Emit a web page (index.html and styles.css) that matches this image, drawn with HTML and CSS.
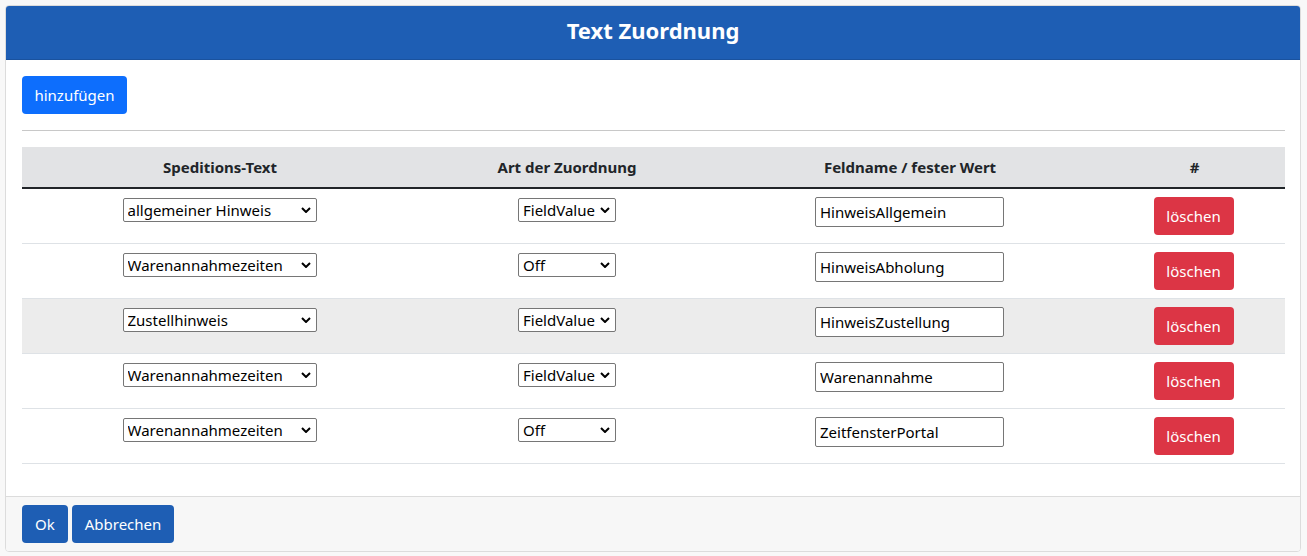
FILE: index.html
```html
<!DOCTYPE html>
<html lang="de">
<head>
    <meta charset="UTF-8">
    <meta name="viewport" content="width=device-width, initial-scale=1.0">
    <title>Text Zuordnung</title>
    <link rel="stylesheet" href="styles.css">
</head>
<body>

    <div class="dialog">
        <div class="dialog-header">Text Zuordnung</div>

        <div class="dialog-body">
            <button class="btn btn-add">hinzufügen</button>
            <hr>

            <table class="mapping">
                <thead>
                    <tr>
                        <th class="col-text">Speditions-Text</th>
                        <th class="col-type">Art der Zuordnung</th>
                        <th class="col-field">Feldname / fester Wert</th>
                        <th class="col-action">#</th>
                    </tr>
                </thead>
                <tbody>
                    <tr>
                        <td><select class="sel-text"><option>allgemeiner Hinweis</option></select></td>
                        <td><select class="sel-type"><option>FieldValue</option></select></td>
                        <td><input type="text" value="HinweisAllgemein"></td>
                        <td><button class="btn btn-delete">löschen</button></td>
                    </tr>
                    <tr>
                        <td><select class="sel-text"><option>Warenannahmezeiten</option></select></td>
                        <td><select class="sel-type"><option>Off</option></select></td>
                        <td><input type="text" value="HinweisAbholung"></td>
                        <td><button class="btn btn-delete">löschen</button></td>
                    </tr>
                    <tr class="hover">
                        <td><select class="sel-text"><option>Zustellhinweis</option></select></td>
                        <td><select class="sel-type"><option>FieldValue</option></select></td>
                        <td><input type="text" value="HinweisZustellung"></td>
                        <td><button class="btn btn-delete">löschen</button></td>
                    </tr>
                    <tr>
                        <td><select class="sel-text"><option>Warenannahmezeiten</option></select></td>
                        <td><select class="sel-type"><option>FieldValue</option></select></td>
                        <td><input type="text" value="Warenannahme"></td>
                        <td><button class="btn btn-delete">löschen</button></td>
                    </tr>
                    <tr>
                        <td><select class="sel-text"><option>Warenannahmezeiten</option></select></td>
                        <td><select class="sel-type"><option>Off</option></select></td>
                        <td><input type="text" value="ZeitfensterPortal"></td>
                        <td><button class="btn btn-delete">löschen</button></td>
                    </tr>
                </tbody>
            </table>
        </div>

        <div class="dialog-footer">
            <button class="btn btn-primary">Ok</button>
            <button class="btn btn-primary">Abbrechen</button>
        </div>
    </div>

</body>
</html>
```

FILE: styles.css
```css
body {
    margin: 0;
    padding: 5px 6px 4px 5px;
    background-color: #f8f8f8;
    font-family: "Noto Sans", "Open Sans", sans-serif;
    font-size: 15px;
    color: #212529;
}

.dialog {
    background-color: white;
    border: 1px solid #dcdcdc;
    border-radius: 4px;
    overflow: hidden;
}

.dialog-header {
    background-color: #1e5eb4;
    color: white;
    font-size: 22px;
    font-weight: bold;
    text-align: center;
    height: 53px;
    line-height: 49px;
    border-bottom: 1px solid #1a529e;
}

.dialog-body {
    padding: 16px 15px 32px 16px;
}

.btn {
    font-family: inherit;
    font-size: 15px;
    color: white;
    border: none;
    border-radius: 4px;
    height: 38px;
    padding: 0 12px;
    cursor: pointer;
}

.btn-add {
    background-color: #0d6efd;
    width: 105px;
}

.btn-delete {
    background-color: #dc3545;
    width: 80px;
    margin-left: -2px;
}

.btn-primary {
    background-color: #1e5eb4;
}

hr {
    border: none;
    border-top: 1px solid #c8c8c8;
    margin: 16px 0 16px 0;
}

.mapping {
    width: 100%;
    border-collapse: collapse;
}

.mapping th {
    background-color: #e2e3e5;
    font-size: 15px;
    font-weight: bold;
    height: 40px;
    padding: 0;
    border-bottom: 2px solid #212529;
}

.col-text { width: 396px; }
.col-type { width: 298px; }
.col-field { width: 388px; }

.mapping td {
    height: 54px;
    padding: 0;
    text-align: center;
    vertical-align: middle;
    border-bottom: 1px solid #dee2e6;
}

.mapping tr.hover td {
    background-color: #ececec;
}

select {
    appearance: none;
    font-family: inherit;
    font-size: 15px;
    color: #000;
    height: 24px;
    padding: 0 20px 0 4px;
    border: 1px solid #767676;
    border-radius: 2px;
    background: white url("data:image/svg+xml;utf8,<svg xmlns='http://www.w3.org/2000/svg' width='10' height='6' viewBox='0 0 10 6'><path d='M1 1l4 4 4-4' fill='none' stroke='black' stroke-width='2'/></svg>") no-repeat right 5px center;
    text-align: left;
    vertical-align: middle;
    position: relative;
    top: -6px;
}

.sel-text { width: 194px; margin-left: -1px; }
.sel-type { width: 98px; margin-left: 0; }

input[type="text"] {
    font-family: inherit;
    font-size: 15px;
    color: #000;
    width: 189px;
    height: 30px;
    box-sizing: border-box;
    padding: 0 4px;
    border: 1px solid #767676;
    border-radius: 2px;
    margin-left: -1px;
    position: relative;
    top: -4px;
}

.dialog-footer {
    background-color: #f7f7f7;
    border-top: 1px solid #dcdcdc;
    padding: 8px 16px 8px 16px;
    display: flex;
    gap: 4px;
}

.dialog-footer .btn {
    padding: 0 13px;
}
```
